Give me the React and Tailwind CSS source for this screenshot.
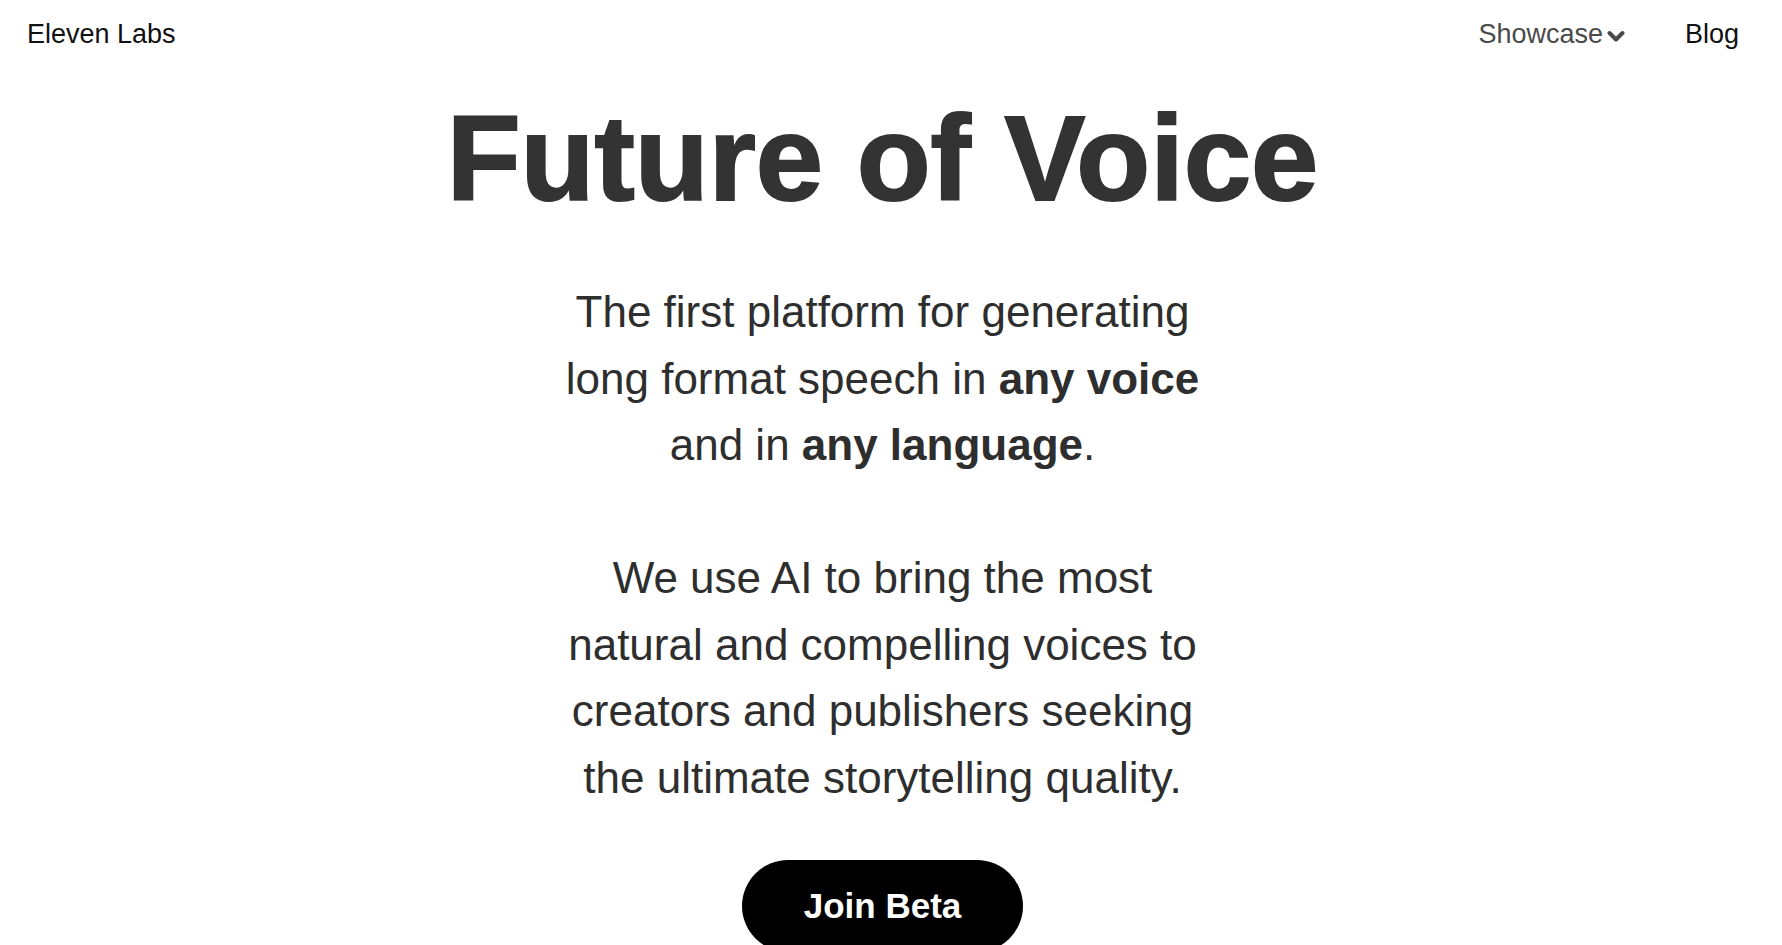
const FONT = "font-['Liberation_Sans',Arial,sans-serif]"

function Chevron() {
  return (
    <svg width="18" height="13" viewBox="0 0 18 13" className="ml-[4px] mt-[4px]" fill="none" stroke="currentColor" strokeWidth="4" strokeLinecap="round" strokeLinejoin="round">
      <polyline points="2.5,3 9,9.5 15.5,3" />
    </svg>
  )
}

function Header() {
  return (
    <header className="flex h-[68px] items-center justify-between pl-[27px] pr-[43px]">
      <a href="#" className="text-[27px] text-[#111]">Eleven Labs</a>
      <nav className="flex items-center gap-[60px]">
        <button className="flex items-center text-[27px] text-[#4a4a4a]">
          Showcase
          <Chevron />
        </button>
        <a href="#" className="text-[27px] text-[#111]">Blog</a>
      </nav>
    </header>
  )
}

export default function App() {
  return (
    <div className={`min-h-screen bg-white ${FONT}`}>
      <Header />
      {/* content column sits as if a 17px scrollbar were on the right */}
      <main className="flex flex-col items-center pr-[17px]">
        <h1 className="mt-[30px] text-[121px] font-bold leading-none text-[#333] [-webkit-text-stroke:2px_#333]">
          Future of Voice
        </h1>

        <div className="mt-[60px] text-center text-[44px] leading-[66.5px] text-[#2e2e2e]">
          <p>
            The first platform for generating<br />
            long format speech in <b>any voice</b><br />
            and in <b>any language</b>.
          </p>
          <p className="mt-[66.5px]">
            We use AI to bring the most<br />
            natural and compelling voices to<br />
            creators and publishers seeking<br />
            the ultimate storytelling quality.
          </p>
        </div>

        <button className="mt-[49px] h-[92px] w-[281px] rounded-full bg-black text-[35px] font-bold text-white">
          Join Beta
        </button>
      </main>
    </div>
  )
}
